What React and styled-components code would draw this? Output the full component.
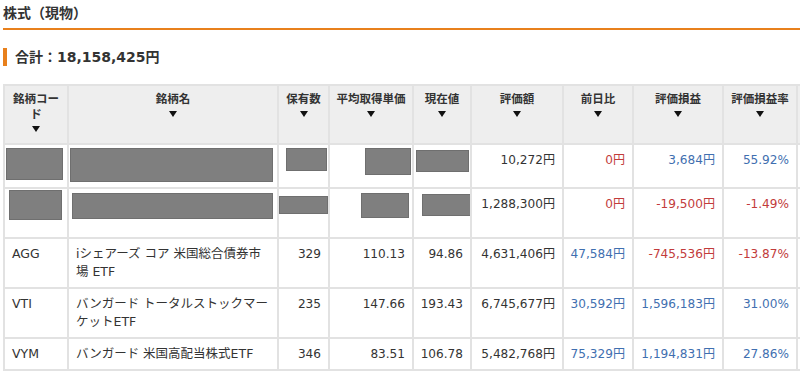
import React from 'react'
import styled, { createGlobalStyle } from 'styled-components'

const GlobalStyle = createGlobalStyle`
  html, body {
    margin: 0;
    padding: 0;
    overflow: hidden;
    background: #ffffff;
  }
  body {
    font-family: "DejaVu Sans", "Noto Sans CJK JP", sans-serif;
    color: #333333;
  }
`

const ORANGE = '#e8801c'
const LINE = '#e2e2e2'

const toneColors = {
  plus: '#3f6fb0',
  minus: '#c23b3b',
}

const Page = styled.div`
  padding-left: 3px;
`

const Title = styled.h2`
  margin: 0;
  padding: 3px 0 5px;
  font-size: 14px;
  line-height: 20px;
  font-weight: bold;
  border-bottom: 2px solid ${ORANGE};
`

const Total = styled.div`
  margin-top: 18px;
  display: flex;
  align-items: center;
  gap: 8px;
  height: 18px;
  font-size: 14px;
  line-height: 18px;
  font-weight: bold;

  &::before {
    content: '';
    width: 4px;
    height: 18px;
    background: ${ORANGE};
  }
`

const Table = styled.table`
  margin-top: 18px;
  border-collapse: collapse;
  table-layout: fixed;
  width: 866px;
  font-size: 12.5px;
`

const Col = styled.col`
  width: ${p => p.$w}px;
`

const Head = styled.th`
  background: #eeeeee;
  border: 2px solid ${LINE};
  padding: 6px 6px 11px;
  vertical-align: top;
  text-align: center;
  font-size: 11.5px;
  line-height: 15px;
  font-weight: bold;
  color: #333333;
`

const Arrow = styled.span`
  display: block;
  width: 0;
  height: 0;
  margin: 4px auto 0;
  border-left: 4.5px solid transparent;
  border-right: 4.5px solid transparent;
  border-top: 6px solid #111111;
`

const Cell = styled.td`
  border: 2px solid ${LINE};
  padding: ${p => (p.$mask ? '0' : p.$num ? '6px 7px 6px 0' : '6px 7px')};
  vertical-align: top;
  font-size: ${p => (p.$num ? '12.1px' : '12.5px')};
  line-height: 18px;
  text-align: ${p => (p.$num ? 'right' : 'left')};
  white-space: ${p => (p.$num ? 'nowrap' : 'normal')};
  color: ${p => toneColors[p.$tone] || '#333333'};
`

const Mask = styled.div`
  width: ${p => p.$w}px;
  height: ${p => p.$h}px;
  margin: ${p => p.$t}px 0 ${p => p.$b || 0}px ${p => p.$l}px;
  background: #7f7f7f;
  box-shadow: inset 0 0 0 1px #6f6f6f;
`

const columns = [
  { label: '銘柄コード', w: 64 },
  { label: '銘柄名', w: 210 },
  { label: '保有数', w: 51 },
  { label: '平均取得単価', w: 84 },
  { label: '現在値', w: 58 },
  { label: '評価額', w: 92 },
  { label: '前日比', w: 70 },
  { label: '評価損益', w: 90 },
  { label: '評価損益率', w: 74 },
  { label: '', w: 73, blank: true },
]

// hidden holdings: grey masks over code / name / qty / cost / price
const maskedRows = [
  {
    masks: [
      { l: 1, t: 3, w: 57, h: 32 },
      { l: 1, t: 3, w: 203, h: 34, b: 5 },
      { l: 7, t: 3, w: 41, h: 23 },
      { l: 35, t: 3, w: 46, h: 27 },
      { l: 2, t: 5, w: 53, h: 22 },
    ],
    values: [
      ['10,272円'],
      ['0円', 'minus'],
      ['3,684円', 'plus'],
      ['55.92%', 'plus'],
    ],
  },
  {
    masks: [
      { l: 4, t: 1, w: 53, h: 30, b: 17 },
      { l: 3, t: 4, w: 201, h: 26 },
      { l: 0, t: 7, w: 49, h: 18 },
      { l: 31, t: 4, w: 48, h: 25 },
      { l: 8, t: 5, w: 49, h: 22 },
    ],
    values: [
      ['1,288,300円'],
      ['0円', 'minus'],
      ['-19,500円', 'minus'],
      ['-1.49%', 'minus'],
    ],
  },
]

const holdings = [
  {
    code: 'AGG',
    name: 'iシェアーズ コア 米国総合債券市場 ETF',
    qty: '329',
    cost: '110.13',
    price: '94.86',
    values: [
      ['4,631,406円'],
      ['47,584円', 'plus'],
      ['-745,536円', 'minus'],
      ['-13.87%', 'minus'],
    ],
  },
  {
    code: 'VTI',
    name: 'バンガード トータルストックマーケットETF',
    qty: '235',
    cost: '147.66',
    price: '193.43',
    values: [
      ['6,745,677円'],
      ['30,592円', 'plus'],
      ['1,596,183円', 'plus'],
      ['31.00%', 'plus'],
    ],
  },
  {
    code: 'VYM',
    name: 'バンガード 米国高配当株式ETF',
    qty: '346',
    cost: '83.51',
    price: '106.78',
    values: [
      ['5,482,768円'],
      ['75,329円', 'plus'],
      ['1,194,831円', 'plus'],
      ['27.86%', 'plus'],
    ],
  },
]

const ValueCells = ({ values }) => (
  <>
    {values.map(([text, tone], i) => (
      <Cell key={i} $num $tone={tone}>{text}</Cell>
    ))}
    <Cell />
  </>
)

export default function App() {
  return (
    <Page>
      <GlobalStyle />
      <Title>株式（現物）</Title>
      <Total>合計：18,158,425円</Total>
      <Table>
        <colgroup>
          {columns.map((c, i) => <Col key={i} $w={c.w} />)}
        </colgroup>
        <thead>
          <tr>
            {columns.map((c, i) => (
              <Head key={i}>
                {c.label}
                {!c.blank && <Arrow />}
              </Head>
            ))}
          </tr>
        </thead>
        <tbody>
          {maskedRows.map((row, r) => (
            <tr key={`m${r}`}>
              {row.masks.map((m, i) => (
                <Cell key={i} $mask>
                  <Mask $l={m.l} $t={m.t} $w={m.w} $h={m.h} $b={m.b} />
                </Cell>
              ))}
              <ValueCells values={row.values} />
            </tr>
          ))}
          {holdings.map(h => (
            <tr key={h.code}>
              <Cell>{h.code}</Cell>
              <Cell>{h.name}</Cell>
              <Cell $num>{h.qty}</Cell>
              <Cell $num>{h.cost}</Cell>
              <Cell $num>{h.price}</Cell>
              <ValueCells values={h.values} />
            </tr>
          ))}
        </tbody>
      </Table>
    </Page>
  )
}
